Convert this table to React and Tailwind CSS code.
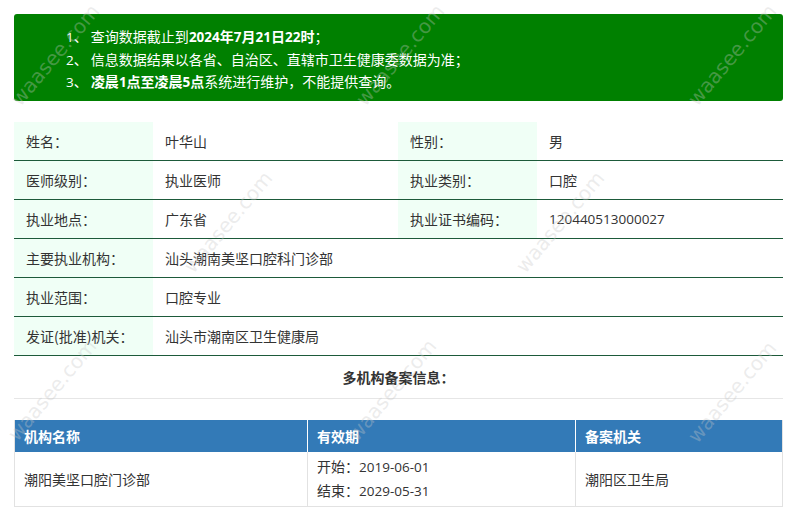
import React from 'react';

const font = { fontFamily: '"Noto Sans CJK SC", sans-serif' };

const marks = [
    [55, 55], [400, 55], [732, 55],
    [228, 222], [560, 222],
    [52, 390], [392, 390], [732, 392],
];

// latin digits are a touch narrower than the CJK glyphs in the original
const Num = ({ children, bold }) => (
    <span className={bold ? 'text-[13.5px] font-bold' : 'text-[13.5px]'} style={{ fontFamily: '"Open Sans", sans-serif' }}>{children}</span>
);

const Row = ({ children }) => (
    <div className="flex h-[39px] border-b border-[#1d5a3a]">{children}</div>
);

const Label = ({ children }) => (
    <div className="w-[139px] shrink-0 bg-[#f0fff6] px-3 flex items-center">{children}</div>
);

const Value = ({ children, wide }) => (
    <div className={wide ? 'flex-1 px-3 flex items-center' : 'w-[245px] shrink-0 px-3 flex items-center'}>{children}</div>
);

export default function App() {
    return (
        <div className="relative w-[800px] h-[516px] overflow-hidden bg-white text-[14px] text-[#333]" style={font}>
            {/* notice */}
            <div className="mx-[14px] mt-[14px] w-[769px] h-[87px] rounded-[3px] bg-[#008000] text-white pl-[52px] pt-[12px] leading-[21.5px]">
                <p><Num>1</Num>、 查询数据截止到<b><Num bold>2024</Num>年<Num bold>7</Num>月<Num bold>21</Num>日<Num bold>22</Num>时</b>；</p>
                <p><Num>2</Num>、 信息数据结果以各省、自治区、直辖市卫生健康委数据为准；</p>
                <p><Num>3</Num>、 <b>凌晨<Num bold>1</Num>点至凌晨<Num bold>5</Num>点</b>系统进行维护，不能提供查询。</p>
            </div>

            {/* doctor info */}
            <div className="mx-[14px] mt-[21px] w-[769px]">
                <Row>
                    <Label>姓名：</Label>
                    <Value>叶华山</Value>
                    <Label>性别：</Label>
                    <Value>男</Value>
                </Row>
                <Row>
                    <Label>医师级别：</Label>
                    <Value>执业医师</Value>
                    <Label>执业类别：</Label>
                    <Value>口腔</Value>
                </Row>
                <Row>
                    <Label>执业地点：</Label>
                    <Value>广东省</Value>
                    <Label>执业证书编码：</Label>
                    <Value><Num>120440513000027</Num></Value>
                </Row>
                <Row>
                    <Label>主要执业机构：</Label>
                    <Value wide>汕头潮南美坚口腔科门诊部</Value>
                </Row>
                <Row>
                    <Label>执业范围：</Label>
                    <Value wide>口腔专业</Value>
                </Row>
                <Row>
                    <Label>发证(批准)机关：</Label>
                    <Value wide>汕头市潮南区卫生健康局</Value>
                </Row>
                <div className="h-[43px] flex items-center justify-center font-bold border-b border-[#e6e6e6]">
                    多机构备案信息：
                </div>
            </div>

            {/* filing table */}
            <div className="mx-[14px] mt-[21px] w-[769px] border border-[#e2e2e2] border-t-0">
                <div className="flex h-[32px] bg-[#337ab7] text-white font-bold">
                    <div className="w-[293px] px-[9px] flex items-center border-r border-white">机构名称</div>
                    <div className="w-[268px] px-[9px] flex items-center border-r border-white">有效期</div>
                    <div className="flex-1 px-[9px] flex items-center">备案机关</div>
                </div>
                <div className="flex h-[54px]">
                    <div className="w-[293px] px-[9px] flex items-center border-r border-[#e2e2e2]">潮阳美坚口腔门诊部</div>
                    <div className="w-[268px] px-[9px] flex flex-col justify-center leading-[23px] border-r border-[#e2e2e2]">
                        <span>开始：<Num>2019-06-01</Num></span>
                        <span>结束：<Num>2029-05-31</Num></span>
                    </div>
                    <div className="flex-1 px-[9px] flex items-center">潮阳区卫生局</div>
                </div>
            </div>

            {/* watermarks */}
            {marks.map(([x, y], i) => (
                <div
                    key={i}
                    className="absolute pointer-events-none text-[20px] text-[rgba(200,200,200,0.35)] whitespace-nowrap -rotate-[50deg] -translate-x-1/2 -translate-y-1/2"
                    style={{ left: x, top: y, fontFamily: '"DejaVu Sans", sans-serif' }}
                >
                    waasee.com
                </div>
            ))}
        </div>
    );
}
